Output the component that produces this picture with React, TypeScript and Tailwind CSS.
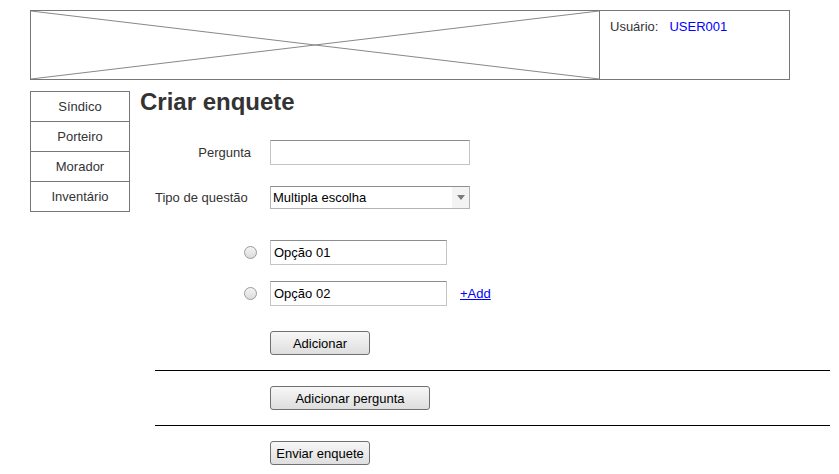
import React from "react";

const menu = ["Síndico", "Porteiro", "Morador", "Inventário"];

const Radio: React.FC = () => (
    <span className="block w-[13px] h-[13px] rounded-full border border-[#9a9a9a] bg-linear-to-b from-[#f4f4f4] to-[#dcdcdc]" />
);

const Botao: React.FC<{ w: string; children: React.ReactNode }> = ({ w, children }) => (
    <button className={`${w} h-[24px] border border-[#707070] rounded-[3px] bg-linear-to-b from-[#f7f7f7] to-[#dedede] text-[13px] text-black leading-none`}>
        {children}
    </button>
);

const App: React.FC = () => {
    return (
        <div className="w-[839px] h-[474px] bg-white font-['Liberation_Sans',Arial,sans-serif] text-[13px] text-[#333] overflow-hidden">
            <div className="pt-[10px] pl-[30px]">
                <div className="flex w-[760px] h-[70px] border border-[#777]">
                    <div className="w-[569px] h-full border-r border-[#777]">
                        <svg width="568" height="68" viewBox="0 0 568 68" preserveAspectRatio="none" className="block">
                            <line x1="0" y1="0" x2="568" y2="68" stroke="#888" strokeWidth="1" />
                            <line x1="0" y1="68" x2="568" y2="0" stroke="#888" strokeWidth="1" />
                        </svg>
                    </div>
                    <div className="pl-[10px] pt-[8px] leading-[16px]">
                        Usuário:<span className="ml-[11px] text-[#0000ff]">USER001</span>
                    </div>
                </div>
            </div>

            <div className="flex">
                <div className="ml-[30px] mt-[11px] w-[100px] h-[121px] border border-[#777] self-start">
                    {menu.map((m, i) => (
                        <div
                            key={m}
                            className={`h-[29px] flex items-center justify-center ${i < menu.length - 1 ? "box-content border-b border-[#777]" : ""}`}
                        >
                            {m}
                        </div>
                    ))}
                </div>

                <div className="ml-[10px] flex-1">
                    <h1 className="mt-[8px] text-[24px] leading-[28px] font-bold text-[#333]">Criar enquete</h1>

                    <div className="mt-[24px] flex items-center h-[25px]">
                        <span className="w-[111px] text-right">Pergunta</span>
                        <div className="ml-[19px] w-[200px] h-[25px] border border-[#c4c4c4] border-t-[#8e8e8e]" />
                    </div>

                    <div className="mt-[21px] flex items-center h-[23px]">
                        <span className="w-[130px] pl-[15px]">Tipo de questão</span>
                        <div className="w-[200px] h-[23px] flex border border-[#b4b4b4] border-t-[#8e8e8e] text-black">
                            <span className="flex-1 pl-[2px] leading-[21px]">Multipla escolha</span>
                            <span className="w-[17px] flex items-center justify-center bg-[#f3f3f3]">
                                <svg width="8" height="5" viewBox="0 0 8 5">
                                    <path d="M0 0 L8 0 L4 5 Z" fill="#7a7a7a" />
                                </svg>
                            </span>
                        </div>
                    </div>

                    <div className="mt-[31px] flex items-center h-[25px] pl-[104px]">
                        <Radio />
                        <div className="ml-[13px] w-[177px] h-[25px] pl-[3px] leading-[23px] border border-[#c4c4c4] border-t-[#8e8e8e] text-black">Opção 01</div>
                    </div>

                    <div className="mt-[16px] flex items-center h-[25px] pl-[104px]">
                        <Radio />
                        <div className="ml-[13px] w-[177px] h-[25px] pl-[3px] leading-[23px] border border-[#c4c4c4] border-t-[#8e8e8e] text-black">Opção 02</div>
                        <a href="#" className="ml-[13px] text-[#0000ff] underline">+Add</a>
                    </div>

                    <div className="mt-[25px] ml-[130px]">
                        <Botao w="w-[100px]">Adicionar</Botao>
                    </div>

                    <div className="mt-[15px] ml-[15px] w-[675px] h-px bg-black" />

                    <div className="mt-[15px] ml-[130px]">
                        <Botao w="w-[160px]">Adicionar pergunta</Botao>
                    </div>

                    <div className="mt-[15px] ml-[15px] w-[675px] h-px bg-black" />

                    <div className="mt-[15px] ml-[130px]">
                        <Botao w="w-[100px]">Enviar enquete</Botao>
                    </div>
                </div>
            </div>
        </div>
    );
};

export default App;
